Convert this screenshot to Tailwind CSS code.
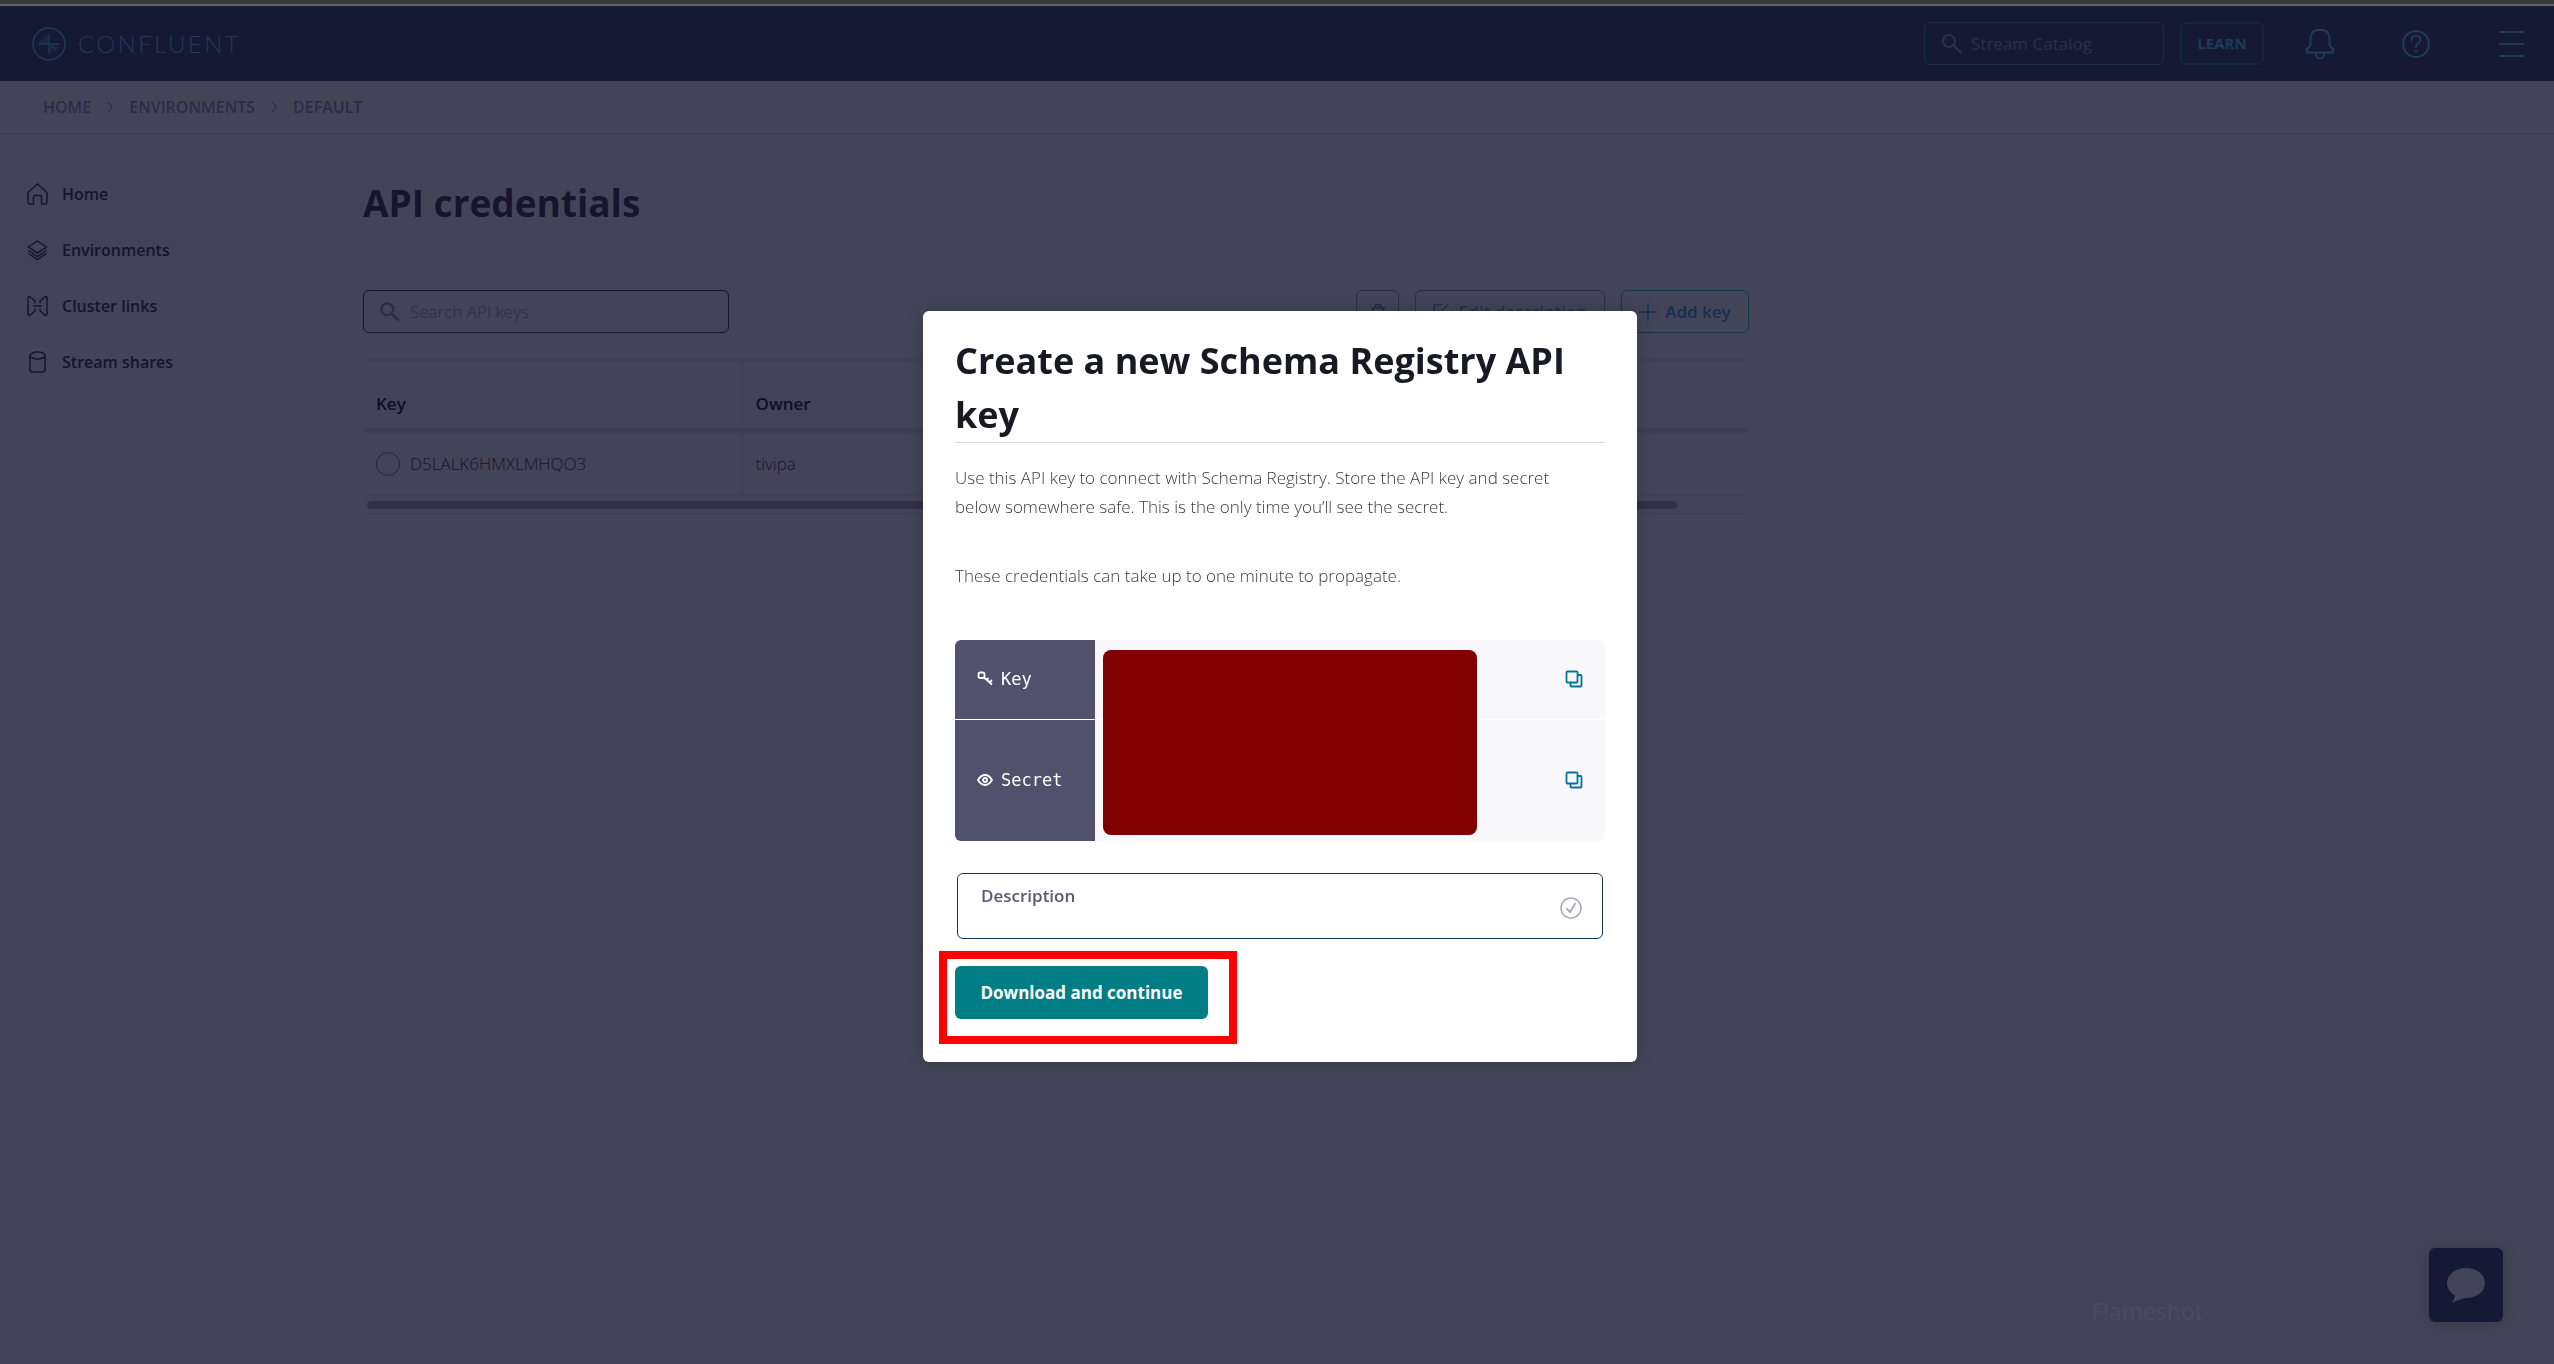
<!DOCTYPE html>
<html lang="en">
<head>
<meta charset="utf-8">
<title>API credentials</title>
<script src="https://cdn.jsdelivr.net/npm/@tailwindcss/browser@4"></script>
</head>
<body class="flex min-h-screen flex-col bg-[#444458] font-['Open_Sans',sans-serif] text-[#15152c]">

<div class="h-1 shrink-0 bg-[#37383a]"></div>
<header class="flex h-[77px] shrink-0 items-center justify-between border-t-2 border-[#636467] bg-[#151934] pr-[30px] pl-8 text-[#1e3b57]">
  <a href="#" class="flex items-center gap-3" aria-label="Confluent home">
    <svg class="size-[34px]" viewBox="0 0 34 34" fill="none" stroke="currentColor" stroke-width="1.500"><circle cx="17" cy="17" r="16"/><path d="M17 7v20M6.500 17h21" stroke-width="1.300"/><path d="M16 16 8 13M16 15.500 10 9.500M16.500 15 14 8M18 18l8 3M18 18.500l6.500 6.500M17.500 19l3 7.500M15.500 16.500l-8-1.500M18.500 18.500l7 4.500" stroke-width="0.900"/></svg>
    <span class="font-[Lato] text-2xl font-light tracking-widest">CONFLUENT</span>
  </a>
  <div class="flex items-center">
    <label class="flex h-[43px] w-[240px] items-center gap-2 rounded-md border border-[#1b2f4d] pl-4 text-[#2c2f4b]">
      <svg class="size-[22px] shrink-0" viewBox="0 0 22 22" fill="none" stroke="currentColor" stroke-width="2.200"><circle cx="8" cy="8" r="6"/><path d="m12.500 12.500 8 8"/></svg>
      <input type="text" aria-label="Stream Catalog" placeholder="Stream Catalog" class="w-full min-w-0 bg-transparent text-[17px] outline-none placeholder:text-[#2c2f4b]">
    </label>
    <button class="ml-4 h-[43px] w-[84px] rounded-md border-2 border-[#13263f] text-[15px] font-bold">LEARN</button>
    <button class="ml-[42px]" aria-label="Notifications"><svg class="h-8 w-7" viewBox="0 0 28 32" fill="none" stroke="currentColor" stroke-width="2"><path d="M1 24.500v-3.500l3.500-3.500V9.500a7.500 7.500 0 0 1 7.500-7.500h4a7.500 7.500 0 0 1 7.500 7.500v8l3.500 3.500v3.500zM10 24.500v2a4 4 0 0 0 8 0v-2"/></svg></button>
    <button class="ml-[68px]" aria-label="Help"><svg class="size-7" viewBox="0 0 28 28" fill="none" stroke="currentColor" stroke-width="2"><circle cx="14" cy="14" r="13"/><path d="M9.500 11V10a4.500 4.500 0 1 1 9 0c0 3-4.500 3-4.500 6.500v1.500M14 20v2.500"/></svg></button>
    <button class="ml-[69px]" aria-label="Menu"><svg class="h-[26px] w-[25px]" viewBox="0 0 25 26" stroke="currentColor" stroke-width="2"><path d="M0 1h25M0 13h25M0 25h25"/></svg></button>
  </div>
</header>

<nav aria-label="Breadcrumb" class="flex h-[53px] shrink-0 items-center gap-4 border-b border-[#3c3c51] pl-[43px] text-base font-semibold text-[#2c2b49]">
  <a href="#">HOME</a>
  <svg class="h-3 w-1.5" viewBox="0 0 6 12" fill="none" stroke="currentColor" stroke-width="1.200"><path d="m1 1 4 5-4 5"/></svg>
  <a href="#">ENVIRONMENTS</a>
  <svg class="h-3 w-1.5" viewBox="0 0 6 12" fill="none" stroke="currentColor" stroke-width="1.200"><path d="m1 1 4 5-4 5"/></svg>
  <a href="#">DEFAULT</a>
</nav>

<div class="flex grow">
  <aside class="w-[320px] shrink-0 pt-9">
    <nav aria-label="Main" class="flex flex-col gap-[9px] text-base font-semibold">
      <a href="#" class="flex h-[47px] items-center gap-3.5 pl-[27px]"><svg class="h-[22px] w-[21px]" viewBox="0 0 21 22" fill="none" stroke="currentColor" stroke-width="1.500"><path d="M3 21a2 2 0 0 1-2-2V9.500L10.500 1 20 9.500V19a2 2 0 0 1-2 2h-3.500v-7a1.500 1.500 0 0 0-1.500-1.500H8A1.500 1.500 0 0 0 6.500 14v7z"/></svg>Home</a>
      <a href="#" class="flex h-[47px] items-center gap-3.5 bg-[#434357] pl-[27px]"><svg class="h-[22px] w-[21px]" viewBox="0 0 21 22" fill="none" stroke="currentColor" stroke-width="1.500"><path d="m10.500 2 9 6-9 6-9-6zM1.500 11.500l9 6 9-6M1.500 14.500l9 6 9-6"/></svg>Environments</a>
      <a href="#" class="flex h-[47px] items-center gap-3.5 pl-[27px]"><svg class="h-[22px] w-[21px]" viewBox="0 0 21 22" fill="none" stroke="currentColor" stroke-width="1.500"><path d="M8 8.500V6L2.500 1.500Q1 1.500 1 3v16q0 1.500 1.500 1.500L8 16v-2.500M13 8.500V6l5.500-4.500Q20 1.500 20 3v16q0 1.500-1.500 1.500L13 16v-2.500M6 11h9"/></svg>Cluster links</a>
      <a href="#" class="flex h-[47px] items-center gap-3.5 pl-[27px]"><svg class="h-[22px] w-[21px]" viewBox="0 0 21 22" fill="none" stroke="currentColor" stroke-width="1.500"><ellipse cx="10.500" cy="4.500" rx="7.500" ry="3.500"/><path d="M3 4.500v14Q3 21 6 21h9q3 0 3-2.500v-14"/></svg>Stream shares</a>
    </nav>
  </aside>

  <main class="w-full max-w-[1429px] pt-[42px] pl-[43px]">
    <h1 class="text-[37px] leading-[54px] font-bold">API credentials</h1>
    <div class="mt-[60px] flex items-center justify-between">
      <label class="flex h-[43px] w-[366px] items-center gap-2.5 rounded-md border border-[#15152c] pl-4 text-[#2c2b49]">
        <svg class="size-[20px] shrink-0" viewBox="0 0 22 22" fill="none" stroke="currentColor" stroke-width="2.500"><circle cx="8" cy="8" r="6.500"/><path d="m12.500 12.500 8 8"/></svg>
        <input type="text" aria-label="Search API keys" placeholder="Search API keys" class="w-full min-w-0 bg-transparent text-[17px] font-light outline-none placeholder:text-[#2c2b49]">
      </label>
      <div class="flex gap-4 text-[17px] font-semibold">
        <button aria-label="Delete" class="flex size-[43px] items-center justify-center rounded-md border border-[#2c2b49] text-[#2c2b49]"><svg class="h-4 w-3.5" viewBox="0 0 14 16" fill="none" stroke="currentColor" stroke-width="2"><path d="M0 4h14M4.500 4V1h5v3M2 4v11h10V4"/></svg></button>
        <button class="flex h-[43px] w-[190px] items-center justify-center gap-2.5 rounded-md border border-[#2c2b49] text-[#2c2b49]"><svg class="size-4" viewBox="0 0 16 16" fill="none" stroke="currentColor" stroke-width="1.500"><path d="M9 1H1v14h13V8M6 9l9.500-8.500M5 6v4h4"/></svg>Edit description</button>
        <button class="flex h-[43px] w-32 items-center justify-center gap-2 rounded-md border border-[#123752] text-[#123052]"><svg class="size-[18px]" viewBox="0 0 18 18" stroke="currentColor" stroke-width="1.500"><path d="M9 0v18M0 9h18"/></svg>Add key</button>
      </div>
    </div>

    <div class="mt-[26px] border-t-2 border-[#3e3e52]">
      <table class="w-full border-collapse text-left text-[17px]">
        <thead>
          <tr class="h-[69px] border-b-[5px] border-[#3e3e52] align-bottom">
            <th class="w-[379px] border-r border-[#3e3e52] pb-[11px] pl-[13px] font-semibold text-[#0d0d24]">Key</th>
            <th class="pb-[11px] pl-[13px] font-semibold text-[#0d0d24]">Owner</th>
          </tr>
        </thead>
        <tbody>
          <tr class="h-[65px] border-b border-[#3e3e52] font-light">
            <td class="border-r border-[#3e3e52] pl-[13px]"><label class="flex items-center gap-2.5"><input type="radio" name="key" class="size-6 appearance-none rounded-full border border-[#22223b]">D5LALK6HMXLMHQO3</label></td>
            <td class="pl-[13px]">tivipa</td>
          </tr>
        </tbody>
      </table>
      <div class="h-[18px] border-b border-[#3e3e52] bg-[#434357] pt-[5px] pr-[72px] pl-1"><div class="h-2 rounded-full bg-[#323149]"></div></div>
    </div>
  </main>
</div>

<div class="fixed right-[331px] bottom-[14px] rounded-2xl bg-[#434357] px-5 pt-3 pb-5 text-[23px] leading-[38px] text-[#4b4b5f]">Flameshot</div>
<button aria-label="Open chat" class="fixed right-[51px] bottom-[42px] flex size-[74px] items-center justify-center rounded-md bg-[#151935] text-[#444458] shadow-[0_0_14px_rgba(0,0,0,0.2)]">
  <svg class="h-[34px] w-[38px]" viewBox="0 0 38 34" fill="currentColor"><path d="M19 0c10.500 0 19 6.500 19 15s-8.500 15-19 15c-6 .5-9 4-14.500 4 2.500-2 3.500-4 3.500-6.500C3 24.500 0 20 0 15 0 6.500 8.500 0 19 0z"/></svg>
</button>

<div class="fixed inset-0 flex items-start justify-center pt-[311px] pl-1.5">
  <section role="dialog" aria-labelledby="dialog-title" class="w-[714px] rounded-md bg-white px-8 pt-[23px] pb-[43px] shadow-[0_0_16px_rgba(0,0,0,0.2)]">
    <h2 id="dialog-title" class="border-b border-[#dcdcdf] text-4xl/[54px] font-bold text-[#191924]">Create a new Schema Registry API key</h2>
    <p class="mt-5 pr-4 text-[17px] leading-[29px] font-light text-[#3a3a48]">Use this API key to connect with Schema Registry. Store the API key and secret below somewhere safe. This is the only time you’ll see the secret.</p>
    <p class="mt-10 text-[17px] leading-[29px] font-light text-[#3a3a48]">These credentials can take up to one minute to propagate.</p>

    <div class="relative mt-[50px] overflow-hidden rounded-md">
      <table class="w-full border-collapse text-left">
        <tr class="h-[79px] border-b border-white">
          <th class="w-[140px] bg-[#52516d] pl-[22px] font-['DejaVu_Sans_Mono',monospace] text-[17px] font-normal text-white"><span class="flex items-center gap-2"><svg class="size-4" viewBox="0 0 16 16" fill="none" stroke="currentColor" stroke-width="1.800"><rect x="1.500" y="1.500" width="6" height="5.500" rx="1.800"/><path d="m7 6.500 8 7M12.500 11.500l2.500-2.500M9.500 9l2-2"/></svg>Key</span></th>
          <td class="bg-[#f8f8fa] pr-[22px] text-[#04749c]"><button aria-label="Copy key" class="ml-auto block"><svg class="size-[18px]" viewBox="0 0 18 18" fill="none" stroke="currentColor" stroke-width="1.800"><rect x="1.500" y="1.500" width="11" height="11" rx="1"/><path d="M12.500 5h3q1 0 1 1v9.500q0 1-1 1H6.500q-1 0-1-1v-3"/></svg></button></td>
        </tr>
        <tr class="h-[122px]">
          <th class="bg-[#52516d] pl-[22px] font-['DejaVu_Sans_Mono',monospace] text-[17px] font-normal text-white"><span class="flex items-center gap-2"><svg class="size-4" viewBox="0 0 16 16" fill="none" stroke="currentColor" stroke-width="1.800"><path d="M1 8q3-5 7-5t7 5q-3 5-7 5T1 8z"/><circle cx="8" cy="8" r="2"/></svg>Secret</span></th>
          <td class="bg-[#f8f8fa] pr-[22px] text-[#04749c]"><button aria-label="Copy secret" class="ml-auto block"><svg class="size-[18px]" viewBox="0 0 18 18" fill="none" stroke="currentColor" stroke-width="1.800"><rect x="1.500" y="1.500" width="11" height="11" rx="1"/><path d="M12.500 5h3q1 0 1 1v9.500q0 1-1 1H6.500q-1 0-1-1v-3"/></svg></button></td>
        </tr>
      </table>
      <div class="absolute top-2.5 left-[148px] h-[185px] w-[374px] rounded-lg bg-[#800000]"></div>
    </div>

    <div class="mx-0.5 mt-8 flex h-[66px] items-center rounded-md border border-[#17344d] pr-5 pl-[23px]">
      <div class="flex grow flex-col self-stretch pt-2.5">
        <label for="description" class="text-[17px] leading-6 font-semibold text-[#5a5873]">Description</label>
        <input id="description" type="text" class="h-6 w-full bg-transparent outline-none">
      </div>
      <svg class="mt-1 size-[22px]" viewBox="0 0 22 22" fill="none" stroke="#aaa8bb" stroke-width="1.500"><circle cx="11" cy="11" r="10"/><path d="m6.500 11.500 3.500 3.500 5.500-9" stroke-width="1.800"/></svg>
    </div>

    <div class="relative mt-[27px] w-[253px]">
      <button class="h-[53px] w-full rounded-md bg-[#007d85] text-[17px] font-bold text-white">Download and continue</button>
      <div class="pointer-events-none absolute -top-[15px] -right-[29px] -bottom-[25px] -left-4 border-8 border-[#ff0000]"></div>
    </div>
  </section>
</div>
</body>
</html>
